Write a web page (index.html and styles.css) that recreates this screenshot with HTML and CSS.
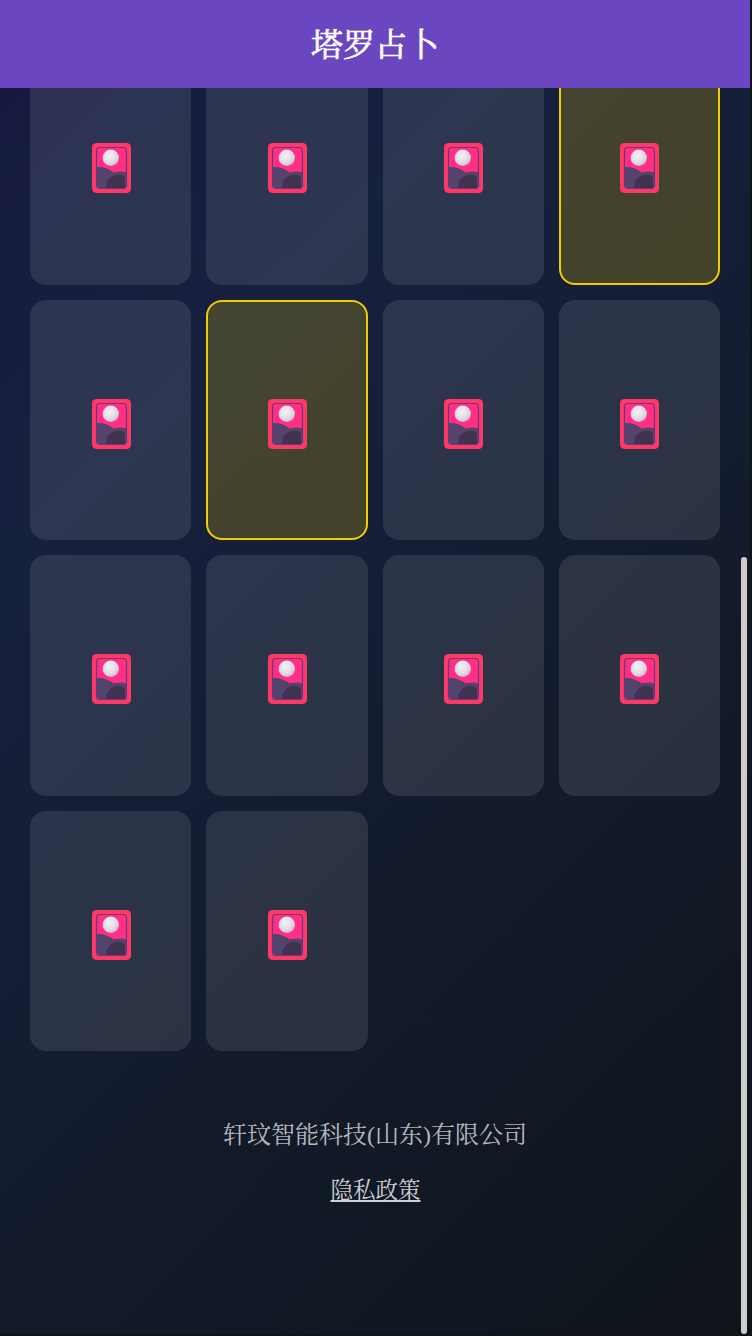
FILE: index.html
```html
<!DOCTYPE html>
<html lang="zh-CN">
<head>
    <meta charset="UTF-8">
    <title>塔罗占卜</title>
    <link rel="stylesheet" href="styles.css">
</head>
<body>
<svg class="defs" width="0" height="0" aria-hidden="true">
    <defs>
        <radialGradient id="moon" cx="0.42" cy="0.38" r="0.65">
            <stop offset="0" stop-color="#f6f2f6"/>
            <stop offset="0.6" stop-color="#e4dce4"/>
            <stop offset="1" stop-color="#c9b9c9"/>
        </radialGradient>
        <symbol id="card-back" viewBox="0 0 39 50">
            <rect width="39" height="50" rx="4.500" fill="#ff3868"/>
            <rect x="4.500" y="4.500" width="30" height="41" rx="3.500" fill="#ff2f86" stroke="#6a3a72" stroke-width="1.200"/>
            <path d="M5 24c6-.5 12 1.500 17 5.500 4-1.500 9-1.500 12.500 0v12.500a3 3 0 0 1-3 3H8a3 3 0 0 1-3-3z" fill="#54436f"/>
            <path d="M14 45c0-7 4-12 11-13 4-.5 7 .5 8 3v10z" fill="#3e3350"/>
            <circle cx="18.800" cy="14.800" r="8.200" fill="url(#moon)"/>
        </symbol>
    </defs>
</svg>

<div class="page">
    <header class="topbar">塔罗占卜</header>

    <main class="deck">
        <div class="card"><svg class="card__icon"><use href="#card-back"/></svg></div>
        <div class="card"><svg class="card__icon"><use href="#card-back"/></svg></div>
        <div class="card"><svg class="card__icon"><use href="#card-back"/></svg></div>
        <div class="card card--picked"><svg class="card__icon"><use href="#card-back"/></svg></div>

        <div class="card"><svg class="card__icon"><use href="#card-back"/></svg></div>
        <div class="card card--picked"><svg class="card__icon"><use href="#card-back"/></svg></div>
        <div class="card"><svg class="card__icon"><use href="#card-back"/></svg></div>
        <div class="card"><svg class="card__icon"><use href="#card-back"/></svg></div>

        <div class="card"><svg class="card__icon"><use href="#card-back"/></svg></div>
        <div class="card"><svg class="card__icon"><use href="#card-back"/></svg></div>
        <div class="card"><svg class="card__icon"><use href="#card-back"/></svg></div>
        <div class="card"><svg class="card__icon"><use href="#card-back"/></svg></div>

        <div class="card"><svg class="card__icon"><use href="#card-back"/></svg></div>
        <div class="card"><svg class="card__icon"><use href="#card-back"/></svg></div>
    </main>

    <footer class="footer">
        <div class="footer__company">轩玟智能科技(山东)有限公司</div>
        <a class="footer__link" href="#">隐私政策</a>
    </footer>

    <div class="scroll-thumb"></div>
</div>
</body>
</html>
```

FILE: styles.css
```css
html {
    background: #0f1419;
}

body {
    margin: 0;
    font-family: "Liberation Serif", "Noto Serif CJK SC", serif;
}

.defs {
    display: block;
}

/* the gradient belongs to the whole long page, we only see the scrolled part */
.page {
    position: relative;
    width: 750px;
    height: 1334px;
    overflow: hidden;
    background: linear-gradient(135deg, #170a45 0%, #16213e 50%, #0f1419 100%) 0 -956px / 750px 2290px no-repeat;
}

.topbar {
    position: absolute;
    top: 0;
    left: 0;
    right: 0;
    z-index: 2;
    height: 84px;
    padding-bottom: 4px;
    display: flex;
    justify-content: center;
    align-items: center;

    background: #6b46c1;
    color: #fff;
    font-size: 32px;
    font-weight: normal;
    -webkit-text-stroke: 0.7px #fff;
}

.deck {
    display: grid;
    grid-template-columns: repeat(4, 1fr);
    grid-auto-rows: 240.4px;
    gap: 15px;
    padding: 44.4px 30px 0;
}

.card {
    box-sizing: border-box;
    display: flex;
    justify-content: center;
    align-items: center;

    background: rgba(255, 255, 255, 0.1);
    border-radius: 16px;
}

.card--picked {
    background: rgba(255, 215, 0, 0.2);
    border: 2px solid #f0cc00;
}

.card__icon {
    width: 39px;
    height: 50px;
    margin: 7.5px 0 0 0.8px;
    filter: blur(0.4px);
}

.footer {
    padding-top: 66px;
    text-align: center;
}

.footer__company {
    font-size: 24px;
    line-height: 36px;
    color: rgba(255, 255, 255, 0.7);
}

.footer__link {
    display: inline-block;
    margin-top: 20px;
    margin-left: 1px;
    font-size: 22.5px;
    line-height: 36px;
    color: rgba(255, 255, 255, 0.8);
}

.scroll-thumb {
    position: absolute;
    top: 557px;
    right: 3px;
    bottom: 0;
    width: 6px;
    border-radius: 3px;
    background: #cdcdcd;
}
```
